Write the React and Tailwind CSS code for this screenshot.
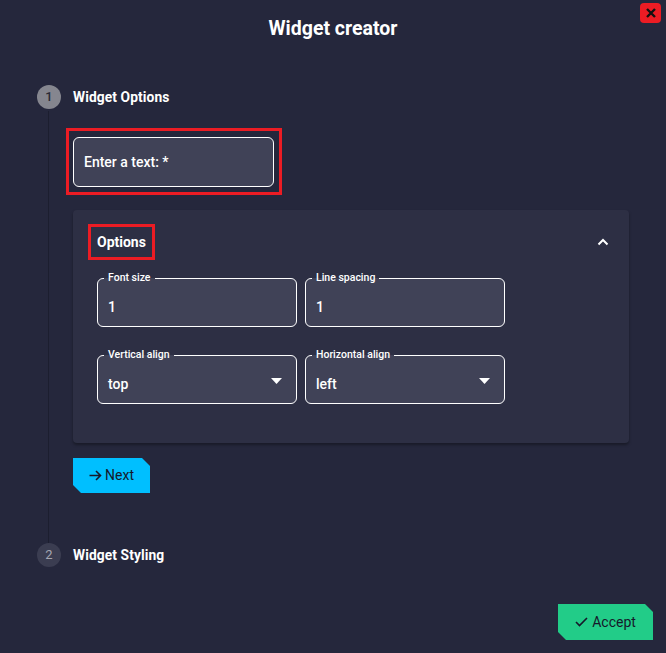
import React from "react";

const cut =
  "[clip-path:polygon(0_0,calc(100%-8px)_0,100%_8px,100%_100%,8px_100%,0_calc(100%-8px))]";

function Field({ label, value, select }) {
  return (
    <fieldset className="relative w-[200px] h-[55px] -mt-[5px] rounded-[6px] border border-white bg-[#404257] px-[10px] min-w-0">
      <legend className="ml-[-4px] px-[4px] text-[10.5px] font-medium leading-[12px] text-white">
        {label}
      </legend>
      <div className="flex h-[42px] items-center justify-between pt-[4px]">
        <span className="text-[14px] font-medium text-white">{value}</span>
        {select && (
          <svg width="11" height="6" viewBox="0 0 11 6" className="mr-[4px] -mt-[6px]">
            <path d="M0 0h11L5.5 6z" fill="#fff" />
          </svg>
        )}
      </div>
    </fieldset>
  );
}

export default function App() {
  return (
    <div
      className="relative flex h-[653px] w-full flex-col bg-[#25273c] text-white"
      style={{ fontFamily: "Roboto, 'Liberation Sans', sans-serif" }}
    >
      <button className="absolute right-[5px] top-[3px] flex h-[20px] w-[21px] items-center justify-center rounded-[4px] bg-[#ec1c24]">
        <svg width="10" height="10" viewBox="0 0 10 10">
          <path d="M1 1l8 8M9 1l-8 8" stroke="#111" strokeWidth="2.4" />
        </svg>
      </button>
      <h1 className="pt-[17px] text-center text-[19.5px] font-bold leading-[24px]">
        Widget creator
      </h1>

      <div className="mt-[44px] pl-[37px]">
        <div className="flex items-center gap-[12px]">
          <div className="flex h-[24px] w-[24px] items-center justify-center rounded-full bg-[#85868f] text-[13px] font-medium text-[#2a2b36]">
            1
          </div>
          <span className="text-[13.8px] font-bold tracking-[0.1px]">Widget Options</span>
        </div>
        <div className="ml-[11px] mt-[2px] border-l border-[#1c1e2f] pl-[24px] pt-[17px] pb-[50px]">
          <div className="-ml-[7px] w-fit border-[3px] border-[#ec1c24] pb-[5px] pl-[4px] pr-[5px] pt-[6px]">
            <div className="flex h-[50px] w-[201px] items-center rounded-[6px] border border-white bg-[#404257] px-[10px]">
              <span className="text-[14px] font-medium">Enter a text: *</span>
            </div>
          </div>

          <div className="mt-[15px] w-[556px] rounded-[4px] bg-[#2d2f44] pb-[39px] shadow-[0_2px_3px_rgba(0,0,0,0.35)]">
            <div className="flex items-center justify-between pl-[15px] pr-[20px] pt-[14px]">
              <div className="flex h-[36px] items-center border-[3px] border-[#ec1c24] px-[6px]">
                <span className="text-[14px] font-bold">Options</span>
              </div>
              <svg width="12" height="8" viewBox="0 0 12 8">
                <path d="M1.5 6.5L6 2l4.5 4.5" stroke="#fff" strokeWidth="2" fill="none" />
              </svg>
            </div>
            <div className="mt-[17px] grid w-fit grid-cols-[200px_200px] gap-x-[8px] gap-y-[27px] pl-[24px]">
              <Field label="Font size" value="1" />
              <Field label="Line spacing" value="1" />
              <Field label="Vertical align" value="top" select />
              <Field label="Horizontal align" value="left" select />
            </div>
          </div>

          <button
            className={`mt-[15px] flex h-[35px] w-[77px] items-center justify-center gap-[3px] bg-[#00bfff] text-[14px] text-[#16182a] ${cut}`}
          >
            <svg width="13" height="11" viewBox="0 0 13 11">
              <path d="M0.5 5.5h11M7 1l4.5 4.5L7 10" stroke="#16182a" strokeWidth="1.6" fill="none" />
            </svg>
            Next
          </button>
        </div>
        <div className="flex items-center gap-[12px]">
          <div className="flex h-[24px] w-[24px] items-center justify-center rounded-full bg-[#3b3d51] text-[13px] text-[#a6a7b2]">
            2
          </div>
          <span className="text-[13.8px] font-bold tracking-[0.1px]">Widget Styling</span>
        </div>
      </div>

      <div className="mt-auto flex justify-end pb-[13px] pr-[13px]">
        <button
          className={`flex h-[36px] w-[95px] items-center justify-center gap-[4px] bg-[#22cc88] text-[14px] text-[#16182a] ${cut}`}
        >
          <svg width="13" height="10" viewBox="0 0 13 10">
            <path d="M1 5l3.5 3.5L12 1" stroke="#16182a" strokeWidth="1.6" fill="none" />
          </svg>
          Accept
        </button>
      </div>
    </div>
  );
}
